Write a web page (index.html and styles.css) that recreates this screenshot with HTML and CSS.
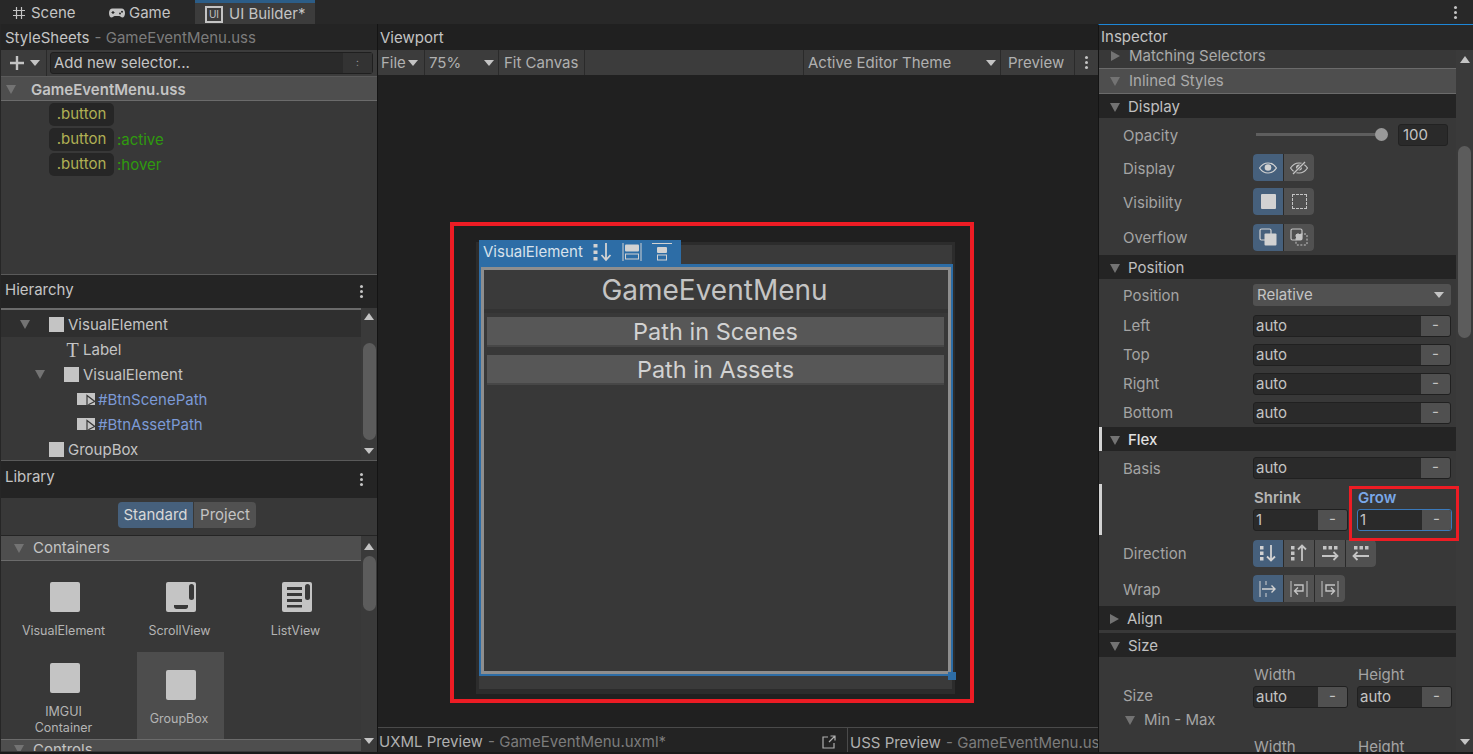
FILE: index.html
```html
<!DOCTYPE html>
<html lang="en">
<head>
    <meta charset="UTF-8">
    <title>UI Builder</title>
    <link rel="stylesheet" href="styles.css">
</head>
<body>
    <!-- Abas do editor -->
    <div class="tabs">
        <div class="tab tab-scene">
            <svg class="tab-icon" width="14" height="14" viewBox="0 0 14 14"><path d="M4.500 1v12M9.500 1v12M1 4.500h12M1 9.500h12" stroke="#c4c4c4" stroke-width="1.200" fill="none"/></svg>
            Scene
        </div>
        <div class="tab tab-game">
            <svg class="tab-icon" width="18" height="12" viewBox="0 0 18 12"><path d="M4.500 1.500h9c2.200 0 3.500 1.800 3.500 4.500s-1 4.500-2.600 4.500c-1.300 0-2-1.500-3.200-1.500H6.800c-1.200 0-1.900 1.500-3.200 1.500C2 10.500 1 8.700 1 6s1.300-4.500 3.500-4.500z" fill="#c4c4c4"/><path d="M3.500 5.500h3M5 4v3" stroke="#282828" stroke-width="1.200"/><circle cx="12" cy="6.500" r="1" fill="#282828"/><circle cx="14" cy="4.800" r="1" fill="#282828"/></svg>
            Game
        </div>
        <div class="tab tab-active">
            <span class="ui-mark">UI</span>
            UI Builder*
        </div>
        <div class="tabs-menu"><span class="dots"></span></div>
    </div>

    <div class="main">
        <!-- Coluna esquerda -->
        <div class="left">
            <div class="pane-title pane-stylesheets">StyleSheets <span class="dim">- GameEventMenu.uss</span></div>
            <div class="selector-bar">
                <div class="add-btn">
                    <svg width="16" height="16" viewBox="0 0 16 16"><path d="M8 1v14M1 8h14" stroke="#c4c4c4" stroke-width="2.400"/></svg>
                    <span class="tri-down small light"></span>
                </div>
                <div class="selector-input">
                    <span class="selector-text">Add new selector...</span>
                    <span class="selector-more">:</span>
                </div>
            </div>
            <div class="sheet-head"><span class="tri-down"></span><b>GameEventMenu.uss</b></div>
            <div class="sheet-list">
                <div class="sel-row"><span class="pill">.button</span></div>
                <div class="sel-row"><span class="pill">.button</span><span class="pseudo">:active</span></div>
                <div class="sel-row"><span class="pill">.button</span><span class="pseudo">:hover</span></div>
            </div>

            <div class="pane-title pane-hierarchy">Hierarchy <span class="dots"></span></div>
            <div class="tree-wrap">
                <div class="tree">
                    <div class="tree-row tree-selected lvl-1"><span class="tri-down"></span><span class="el-box"></span>VisualElement</div>
                    <div class="tree-row lvl-2"><span class="t-glyph">T</span>Label</div>
                    <div class="tree-row lvl-3"><span class="tri-down"></span><span class="el-box"></span>VisualElement</div>
                    <div class="tree-row lvl-4 named"><svg class="btn-glyph" width="19" height="15" viewBox="0 0 19 15"><rect x="0" y="1" width="18" height="12" fill="#c4c4c4"/><path d="M10 3.500v11l2.300-2.300 5.500-2.700z" fill="#c4c4c4" stroke="#383838" stroke-width="1.200"/></svg>#BtnScenePath</div>
                    <div class="tree-row lvl-4 named"><svg class="btn-glyph" width="19" height="15" viewBox="0 0 19 15"><rect x="0" y="1" width="18" height="12" fill="#c4c4c4"/><path d="M10 3.500v11l2.300-2.300 5.500-2.700z" fill="#c4c4c4" stroke="#383838" stroke-width="1.200"/></svg>#BtnAssetPath</div>
                    <div class="tree-row lvl-1 no-arrow"><span class="el-box"></span>GroupBox</div>
                </div>
                <div class="scroll scroll-tree">
                    <span class="tri-up light"></span>
                    <span class="thumb"></span>
                    <span class="tri-down light small"></span>
                </div>
            </div>

            <div class="pane-title pane-library">Library <span class="dots"></span></div>
            <div class="lib-toggle">
                <span class="lib-btn lib-on">Standard</span><span class="lib-btn">Project</span>
            </div>
            <div class="lib-body">
                <div class="lib-content">
                    <div class="lib-head"><span class="tri-down"></span>Containers</div>
                    <div class="lib-grid">
                        <div class="lib-item"><span class="lib-box"></span><span>VisualElement</span></div>
                        <div class="lib-item">
                            <svg class="lib-svg" width="30" height="30" viewBox="0 0 30 30"><rect width="30" height="30" rx="2" fill="#c4c4c4"/><rect x="23" y="2" width="5" height="16" rx="2.500" fill="#383838"/><path d="M8 23h14v1.500c0 1.500-1 2.500-2.500 2.500h-9C9 27 8 26 8 24.500z" fill="#383838"/></svg>
                            <span>ScrollView</span>
                        </div>
                        <div class="lib-item">
                            <svg class="lib-svg" width="30" height="30" viewBox="0 0 30 30"><rect width="30" height="30" rx="2" fill="#c4c4c4"/><rect x="23" y="2" width="5" height="16" rx="2.500" fill="#383838"/><path d="M5 5h15v3H5zM5 11h15v3H5zM5 17h15v3H5zM5 23h15v2.500H5z" fill="#383838"/></svg>
                            <span>ListView</span>
                        </div>
                        <div class="lib-item"><span class="lib-box"></span><span>IMGUI<br>Container</span></div>
                        <div class="lib-item lib-hover"><span class="lib-box"></span><span>GroupBox</span></div>
                    </div>
                    <div class="lib-head lib-head-last"><span class="tri-down"></span>Controls</div>
                </div>
                <div class="scroll scroll-lib">
                    <span class="tri-up light"></span>
                    <span class="thumb"></span>
                    <span class="tri-down light small"></span>
                </div>
            </div>
        </div>

        <!-- Coluna central -->
        <div class="center">
            <div class="pane-title pane-viewport">Viewport</div>
            <div class="view-bar">
                <div class="vb vb-file">File <span class="tri-down small light"></span></div>
                <div class="vb vb-zoom">75% <span class="tri-down small light"></span></div>
                <div class="vb vb-fit">Fit Canvas</div>
                <div class="vb vb-gap"></div>
                <div class="vb vb-theme">Active Editor Theme <span class="tri-down small light"></span></div>
                <div class="vb vb-preview">Preview</div>
                <div class="vb vb-more"><span class="dots"></span></div>
            </div>
            <div class="stage">
                <div class="canvas">
                    <div class="red-box"></div>
                    <div class="canvas-inner">
                        <div class="picked">
                            <div class="picked-tab">
                                <span>VisualElement</span>
                                <svg width="19" height="20" viewBox="0 0 19 20"><path d="M0.500 2h4v3.500h-4zM0.500 8.500h4V12h-4zM0.500 15h4v3.500h-4z" fill="#d2d2d2"/><path d="M13 1v16M8.500 13l4.500 5 4.500-5" stroke="#d2d2d2" stroke-width="1.800" fill="none"/></svg>
                                <svg width="20" height="20" viewBox="0 0 20 20"><path d="M1 1v18M19 1v18" stroke="#d2d2d2" stroke-width="1"/><rect x="3" y="2.500" width="14" height="7" rx="1" fill="#d2d2d2"/><rect x="3.500" y="12" width="13" height="5" fill="none" stroke="#d2d2d2"/></svg>
                                <svg width="20" height="20" viewBox="0 0 20 20"><path d="M0 1.500h20" stroke="#d2d2d2"/><rect x="5" y="5" width="10" height="6" rx="1" fill="#d2d2d2"/><rect x="5.500" y="13" width="9" height="5" fill="none" stroke="#d2d2d2"/></svg>
                            </div>
                            <div class="doc">
                                <div class="doc-title">GameEventMenu</div>
                                <div class="doc-btn">Path in Scenes</div>
                                <div class="doc-btn">Path in Assets</div>
                            </div>
                            <span class="resize-handle"></span>
                        </div>
                    </div>
                </div>
            </div>
            <div class="previews">
                <div class="preview-uxml">
                    <span>UXML Preview <span class="dim">- GameEventMenu.uxml*</span></span>
                    <svg width="14" height="14" viewBox="0 0 14 14"><path d="M6 2H1v11h11V8M7 7l6-6M8.500 1H13v4.500" stroke="#b0b0b0" stroke-width="1.200" fill="none"/></svg>
                </div>
                <div class="preview-uss">USS Preview <span class="dim">- GameEventMenu.uss</span></div>
            </div>
        </div>

        <!-- Inspetor -->
        <div class="inspector">
            <div class="pane-title pane-inspector">Inspector</div>
            <div class="insp-body">
                <div class="insp-content">
                    <div class="sec sec-matching"><span class="tri-right"></span>Matching Selectors</div>
                    <div class="sec sec-inlined"><span class="tri-down"></span>Inlined Styles</div>

                    <div class="group-head"><span class="tri-down"></span>Display</div>
                    <div class="row row-33">
                        <label>Opacity</label>
                        <div class="slider"><span class="slider-track"></span><span class="slider-knob"></span></div>
                        <span class="num-box">100</span>
                    </div>
                    <div class="row row-33">
                        <label>Display</label>
                        <div class="seg">
                            <span class="seg-btn seg-on"><svg width="18" height="12" viewBox="0 0 18 12"><path d="M0.500 6C3 2.300 6 1 9 1s6 1.300 8.500 5c-2.500 3.700-5.500 5-8.500 5S3 9.700.5 6z" fill="none" stroke="#d2d2d2" stroke-width="1.200"/><circle cx="9" cy="5.500" r="3.300" fill="#d2d2d2"/></svg></span>
                            <span class="seg-btn"><svg width="18" height="14" viewBox="0 0 18 14"><path d="M0.500 7C3 3.300 6 2 9 2s6 1.300 8.500 5c-2.500 3.700-5.500 5-8.500 5S3 10.700.5 7z" fill="none" stroke="#c4c4c4" stroke-width="1.200"/><circle cx="9" cy="6.500" r="3" fill="#c4c4c4"/><path d="M3 13L15 1" stroke="#555" stroke-width="3"/><path d="M3 13L15 1" stroke="#c4c4c4" stroke-width="1.200"/></svg></span>
                        </div>
                    </div>
                    <div class="row row-35">
                        <label>Visibility</label>
                        <div class="seg">
                            <span class="seg-btn seg-on"><span class="vis-solid"></span></span>
                            <span class="seg-btn"><span class="vis-dash"></span></span>
                        </div>
                    </div>
                    <div class="row row-36">
                        <label>Overflow</label>
                        <div class="seg">
                            <span class="seg-btn seg-on"><svg width="18" height="18" viewBox="0 0 18 18"><rect x="1" y="1" width="11" height="11" rx="1.500" fill="none" stroke="#d2d2d2" stroke-width="1.200"/><rect x="5.500" y="5.500" width="12" height="12" rx="1" fill="#d2d2d2"/></svg></span>
                            <span class="seg-btn"><svg width="18" height="18" viewBox="0 0 18 18"><rect x="1" y="1" width="11" height="11" rx="1.500" fill="none" stroke="#c4c4c4" stroke-width="1.200"/><rect x="6" y="6" width="6" height="6" fill="#c4c4c4"/><rect x="6" y="6" width="11" height="11" rx="1" fill="none" stroke="#c4c4c4" stroke-dasharray="2 1.500"/></svg></span>
                        </div>
                    </div>

                    <div class="group-head"><span class="tri-down"></span>Position</div>
                    <div class="row row-32">
                        <label>Position</label>
                        <div class="dropdown">Relative <span class="tri-down small light"></span></div>
                    </div>
                    <div class="row row-29"><label>Left</label><div class="field"><span>auto</span><b>-</b></div></div>
                    <div class="row row-29"><label>Top</label><div class="field"><span>auto</span><b>-</b></div></div>
                    <div class="row row-29"><label>Right</label><div class="field"><span>auto</span><b>-</b></div></div>
                    <div class="row row-29"><label>Bottom</label><div class="field"><span>auto</span><b>-</b></div></div>

                    <div class="group-head group-flex"><span class="tri-down"></span>Flex</div>
                    <div class="row row-33 row-basis"><label>Basis</label><div class="field"><span>auto</span><b>-</b></div></div>
                    <div class="pair pair-flex">
                        <div class="pair-col">
                            <span class="pair-label strong">Shrink</span>
                            <div class="field"><span>1</span><b>-</b></div>
                        </div>
                        <div class="pair-col pair-grow">
                            <div class="red-box red-small"></div>
                            <span class="pair-label strong grow-label">Grow</span>
                            <div class="field field-focus"><span>1</span><b>-</b></div>
                        </div>
                    </div>
                    <div class="row row-36 row-direction">
                        <label>Direction</label>
                        <div class="seg">
                            <span class="seg-btn seg-on"><svg width="18" height="18" viewBox="0 0 18 18"><path d="M1 2h3.500v3.500H1zM1 7.500h3.500V11H1zM1 13h3.500v3.500H1z" fill="#d2d2d2"/><path d="M12 1v15M8 12.500l4 4 4-4" stroke="#d2d2d2" stroke-width="1.800" fill="none"/></svg></span>
                            <span class="seg-btn"><svg width="18" height="18" viewBox="0 0 18 18"><path d="M1 2h3.500v3.500H1zM1 7.500h3.500V11H1zM1 13h3.500v3.500H1z" fill="#c4c4c4"/><path d="M12 17V2M8 5.500l4-4 4 4" stroke="#c4c4c4" stroke-width="1.800" fill="none"/></svg></span>
                            <span class="seg-btn"><svg width="18" height="18" viewBox="0 0 18 18"><path d="M2 2h3.500v3.500H2zM7.500 2H11v3.500H7.500zM13 2h3.500v3.500H13z" fill="#c4c4c4"/><path d="M1 12h15M12.500 8l4 4-4 4" stroke="#c4c4c4" stroke-width="1.800" fill="none"/></svg></span>
                            <span class="seg-btn"><svg width="18" height="18" viewBox="0 0 18 18"><path d="M2 2h3.500v3.500H2zM7.500 2H11v3.500H7.500zM13 2h3.500v3.500H13z" fill="#c4c4c4"/><path d="M17 12H2M5.500 8l-4 4 4 4" stroke="#c4c4c4" stroke-width="1.800" fill="none"/></svg></span>
                        </div>
                    </div>
                    <div class="row row-35">
                        <label>Wrap</label>
                        <div class="seg">
                            <span class="seg-btn seg-on"><svg width="18" height="18" viewBox="0 0 18 18"><path d="M1 1v16" stroke="#d2d2d2"/><path d="M7 1v4M7 13v4" stroke="#d2d2d2"/><path d="M3 9h13M12.500 5.500L16 9l-3.500 3.500" stroke="#d2d2d2" stroke-width="1.400" fill="none"/></svg></span>
                            <span class="seg-btn"><svg width="18" height="18" viewBox="0 0 18 18"><path d="M1 1v16M17 1v16" stroke="#c4c4c4"/><path d="M4 5h9v6H5M8 7.500L4.500 11 8 14.500" stroke="#c4c4c4" stroke-width="1.400" fill="none"/></svg></span>
                            <span class="seg-btn"><svg width="18" height="18" viewBox="0 0 18 18"><path d="M1 1v16M17 1v16" stroke="#c4c4c4"/><path d="M14 5H5v6h8M10 7.500l3.500 3.500-3.500 3.500" stroke="#c4c4c4" stroke-width="1.400" fill="none"/></svg></span>
                        </div>
                    </div>

                    <div class="group-head"><span class="tri-right"></span>Align</div>
                    <div class="group-head group-size"><span class="tri-down"></span>Size</div>
                    <div class="size-grid">
                        <label class="size-label">Size</label>
                        <div class="pair">
                            <div class="pair-col"><span class="pair-label">Width</span><div class="field"><span>auto</span><b>-</b></div></div>
                            <div class="pair-col"><span class="pair-label">Height</span><div class="field"><span>auto</span><b>-</b></div></div>
                        </div>
                    </div>
                    <div class="minmax"><span class="tri-down"></span>Min - Max</div>
                    <div class="pair pair-last">
                        <div class="pair-col"><span class="pair-label">Width</span></div>
                        <div class="pair-col"><span class="pair-label">Height</span></div>
                    </div>
                </div>
                <div class="scroll scroll-insp">
                    <span class="tri-up light"></span>
                    <span class="thumb"></span>
                    <span class="tri-down light small"></span>
                </div>
            </div>
        </div>
    </div>
</body>
</html>
```

FILE: styles.css
```css
/* Estilo geral: editor escuro */
* {
    box-sizing: border-box;
}
html, body {
    margin: 0;
    height: 100%;
}
body {
    width: 1473px;
    height: 754px;
    overflow: hidden;
    background-color: #191919;
    color: #c4c4c4;
    font-family: Inter, "Liberation Sans", sans-serif;
    font-size: 15px;
    line-height: 18px;
}
.dim {
    margin-left: 1px;
    color: #7c7c7c;
}

/* Triangulos */
.tri-down, .tri-up, .tri-right {
    display: inline-block;
    width: 0;
    height: 0;
    flex: none;
}
.tri-down {
    border-left: 5.5px solid transparent;
    border-right: 5.5px solid transparent;
    border-top: 9px solid #737373;
}
.tri-up {
    border-left: 5.5px solid transparent;
    border-right: 5.5px solid transparent;
    border-bottom: 7px solid #c4c4c4;
}
.tri-right {
    border-top: 5.5px solid transparent;
    border-bottom: 5.5px solid transparent;
    border-left: 9px solid #737373;
}
.tri-down.small {
    border-left-width: 5px;
    border-right-width: 5px;
    border-top-width: 6px;
}
.tri-down.light {
    border-top-color: #c4c4c4;
}
.dots {
    display: inline-block;
    width: 3px;
    height: 3px;
    border-radius: 50%;
    background: #c4c4c4;
    box-shadow: 0 -5px 0 #c4c4c4, 0 5px 0 #c4c4c4;
}

/* Abas */
.tabs {
    display: flex;
    height: 24px;
    background-color: #282828;
    align-items: stretch;
}
.tab {
    display: flex;
    align-items: center;
    gap: 5px;
    padding-top: 1px;
}
.tab-scene {
    width: 108px;
    padding-left: 12px;
}
.tab-game {
    width: 87px;
    padding-left: 0;
    gap: 3px;
}
.tab-active {
    width: 120px;
    padding-left: 10px;
    background-color: #3c3c3c;
    border-top: 3px solid #2c5d87;
    gap: 6px;
}
.ui-mark {
    display: inline-block;
    width: 18px;
    height: 17px;
    border: 2px solid #c4c4c4;
    font-size: 10px;
    line-height: 13px;
    text-align: center;
}
.tabs-menu {
    margin-left: auto;
    width: 36px;
    display: flex;
    align-items: center;
    justify-content: center;
}

/* Colunas */
.main {
    display: flex;
    height: 728px;
    overflow: hidden;
}
.left {
    width: 377px;
    flex: none;
    background-color: #383838;
    border-left: 1px solid #262626;
}
.center {
    width: 721px;
    flex: none;
    display: flex;
    flex-direction: column;
    background-color: #202020;
    border-left: 1px solid #141414;
}
.inspector {
    flex: 1;
    min-width: 0;
    background-color: #383838;
    border-left: 1px solid #141414;
    border-top: 1px solid #1d87d8;
    display: flex;
    flex-direction: column;
}
.pane-title {
    background-color: #242424;
    display: flex;
    align-items: center;
    padding-left: 4px;
    white-space: pre;
}

/* Painel StyleSheets */
.pane-stylesheets {
    height: 26px;
    padding-top: 1px;
}
.selector-bar {
    height: 27px;
    display: flex;
    background-color: #3c3c3c;
    border-bottom: 1px solid #5a5a5a;
}
.add-btn {
    width: 46px;
    display: flex;
    align-items: center;
    gap: 5px;
    padding-left: 8px;
    border-right: 1px solid #2a2a2a;
}
.selector-input {
    width: 323px;
    height: 22px;
    margin: 2px 0 0 3px;
    display: flex;
    justify-content: space-between;
    background-color: #2a2a2a;
    border: 1px solid #1f1f1f;
    border-radius: 3px;
}
.selector-text {
    padding-left: 3px;
    line-height: 20px;
}
.selector-more {
    width: 29px;
    background-color: #333;
    text-align: center;
    font-size: 10px;
    line-height: 18px;
    color: #999;
}
.sheet-head {
    height: 24px;
    display: flex;
    align-items: center;
    padding: 2px 0 0 5px;
    background-color: #4e4e4e;
    border-bottom: 1px solid #6b6b6b;
}
.sheet-head b {
    margin-left: 15px;
    font-weight: 600;
}
.sheet-list {
    height: 174px;
    padding-top: 1px;
    border-bottom: 1px solid #5a5a5a;
}
.sel-row {
    height: 25px;
    display: flex;
    align-items: center;
    padding-left: 48px;
}
.pill {
    width: 65px;
    height: 23px;
    background-color: #262626;
    border-radius: 5px;
    color: #b0b054;
    text-align: center;
    line-height: 22px;
}
.pseudo {
    margin-left: 3px;
    color: #2f9a0e;
}

/* Hierarquia */
.pane-hierarchy, .pane-library {
    justify-content: space-between;
    padding-right: 14px;
}
.pane-hierarchy {
    height: 33px;
    padding-bottom: 4px;
}
.pane-hierarchy .dots {
    margin-top: 4px;
}
.tree-wrap {
    height: 153px;
    display: flex;
    border-bottom: 1px solid #5a5a5a;
}
.tree {
    width: 360px;
    border-top: 2px solid #6a6a6a;
    overflow: hidden;
}
.tree-row {
    height: 25px;
    display: flex;
    align-items: center;
}
.tree-selected {
    height: 27px;
    padding-top: 2px;
    background-color: #2f2f2f;
}
.lvl-1 {
    padding-left: 19px;
}
.lvl-1 .el-box {
    margin-left: 19px;
}
.lvl-1.no-arrow .el-box {
    margin-left: 29px;
}
.lvl-2 {
    padding-left: 64px;
}
.lvl-3 {
    padding-left: 34px;
}
.lvl-3 .el-box {
    margin-left: 19px;
}
.lvl-4 {
    padding-left: 76px;
}
.named {
    color: #7c9ad6;
}
.el-box {
    width: 15px;
    height: 15px;
    background-color: #c4c4c4;
    margin-right: 4px;
    flex: none;
}
.t-glyph {
    width: 15px;
    margin-right: 3px;
    text-align: center;
    font-family: "Liberation Serif", serif;
    font-size: 20px;
}
.btn-glyph {
    margin-right: 2px;
    flex: none;
}

/* Barras de rolagem */
.scroll {
    flex: 1;
    min-width: 0;
    position: relative;
    display: flex;
    flex-direction: column;
    align-items: center;
    background-color: #3a3a3a;
}
.thumb {
    display: block;
    width: 13px;
    background-color: #5c5c5c;
    border-radius: 7px;
}
.scroll-tree {
    padding-top: 5px;
}
.scroll-tree .thumb {
    height: 97px;
    margin: 23px 0 8px;
}

/* Biblioteca */
.pane-library {
    height: 37px;
    padding-bottom: 6px;
}
.pane-library .dots {
    margin-top: 6px;
}
.lib-toggle {
    height: 38px;
    display: flex;
    padding: 4px 0 0 117px;
    background-color: #383838;
    border-bottom: 1px solid #242424;
}
.lib-btn {
    width: 62px;
    height: 26px;
    background-color: #515151;
    border-radius: 0 4px 4px 0;
    text-align: center;
    line-height: 25px;
}
.lib-on {
    width: 75px;
    margin-right: 1px;
    background-color: #46607c;
    border-radius: 4px 0 0 4px;
    color: #d8d8d8;
}
.lib-body {
    display: flex;
    height: 215px;
}
.lib-content {
    width: 360px;
    overflow: hidden;
}
.lib-head {
    height: 25px;
    display: flex;
    align-items: center;
    padding-left: 13px;
    gap: 9px;
    background-color: #4e4e4e;
    border-bottom: 1px solid #6b6b6b;
}
.lib-head-last {
    border-bottom: 0;
    border-top: 1px solid #6b6b6b;
    align-items: flex-start;
    padding-top: 1px;
}
.lib-head-last .tri-down {
    margin-top: 4px;
}
.lib-grid {
    height: 178px;
    display: grid;
    grid-template-columns: 116px 116px 116px;
    grid-template-rows: 91px 87px;
    padding-left: 6px;
}
.lib-item {
    display: flex;
    flex-direction: column;
    align-items: center;
    font-size: 12.5px;
    line-height: 16px;
    text-align: center;
    color: #b4b4b4;
    padding-top: 21px;
}
.lib-item:nth-child(n+4) {
    padding-top: 11px;
}
.lib-item > span:last-child {
    margin-right: 3px;
}
.lib-box, .lib-svg {
    display: block;
    width: 30px;
    height: 30px;
    margin-bottom: 11px;
    flex: none;
}
.lib-box {
    background-color: #c4c4c4;
    border-radius: 2px;
}
.lib-hover {
    width: 87px;
    margin-left: 14px;
    background-color: #4d4d4d;
    padding-top: 18px !important;
}
.scroll-lib {
    padding-top: 7px;
    background-color: #3a3a3a;
}
.scroll-lib .thumb {
    height: 55px;
    margin: 6px 0 127px;
}

/* Viewport */
.pane-viewport {
    height: 26px;
    padding: 1px 0 0 2px;
    background-color: #202020;
}
.view-bar {
    height: 25px;
    display: flex;
    background-color: #3c3c3c;
    color: #b0b0b0;
    flex: none;
}
.vb {
    display: flex;
    align-items: center;
    justify-content: space-between;
    padding: 0 4px;
    border-right: 1px solid #2a2a2a;
}
.vb-file {
    width: 47px;
    padding: 0 6px 0 3px;
}
.vb-zoom {
    width: 74px;
}
.vb-fit {
    width: 86px;
    padding-left: 5px;
}
.vb-gap {
    width: 219px;
}
.vb-theme {
    width: 197px;
}
.vb-preview {
    width: 74px;
    padding-left: 7px;
}
.vb-more {
    flex: 1;
    justify-content: center;
    border-right: 0;
}
.stage {
    flex: 1;
    min-height: 0;
    padding: 167px 0 0 98px;
    background-color: #202020;
}
.canvas {
    position: relative;
    width: 479px;
    height: 452px;
    padding: 3px 3px 5px 3px;
    background-color: #2c2c2c;
}
.canvas-inner {
    height: 100%;
    background-color: #3a3a3a;
    padding-top: 19px;
}
.picked {
    position: relative;
    width: 474px;
    height: 412px;
    border: 2px solid #2d6da6;
    border-top-width: 3px;
}
.picked-tab {
    position: absolute;
    left: -2px;
    top: -27px;
    width: 202px;
    height: 24px;
    display: flex;
    align-items: center;
    gap: 10px;
    padding-left: 4px;
    background-color: #2d6da6;
    color: #d8e2ec;
}
.picked-tab span {
    margin-right: 0;
}
.doc {
    height: 100%;
    border: 3px solid #8e8e8e;
    background-color: #383838;
}
.doc-title {
    height: 43px;
    background-color: #3a3a3a;
    border-bottom: 4px solid #333;
    text-align: center;
    font-size: 28px;
    line-height: 40px;
    color: #c4c4c4;
    padding-right: 3px;
}
.doc-btn {
    height: 30px;
    margin: 4px 4px 8px 3px;
    background-color: #575757;
    border-bottom: 2px solid #474747;
    text-align: center;
    font-size: 23.5px;
    line-height: 30px;
    color: #d2d2d2;
}
.resize-handle {
    position: absolute;
    right: -5px;
    bottom: -6px;
    width: 8px;
    height: 8px;
    background-color: #2d6da6;
}
.red-box {
    position: absolute;
    left: -26px;
    top: -20px;
    width: 524px;
    height: 481px;
    border: 4px solid #ed1c24;
    z-index: 2;
    pointer-events: none;
}
.previews {
    height: 25px;
    flex: none;
    display: flex;
    border-top: 1px solid #4a4a4a;
    background-color: #232323;
    overflow: hidden;
    white-space: nowrap;
    color: #b0b0b0;
}
.preview-uxml {
    width: 470px;
    flex: none;
    display: flex;
    align-items: center;
    justify-content: space-between;
    padding: 3px 11px 0 1px;
    border-right: 1px solid #4a4a4a;
}
.preview-uss {
    padding: 3px 0 0 2px;
    line-height: 24px;
}

/* Inspetor */
.pane-inspector {
    height: 25px;
    flex: none;
    padding: 0 0 1px 2px;
    background-color: #282828;
}
.insp-body {
    flex: 1;
    min-height: 0;
    display: flex;
}
.insp-content {
    width: 357px;
    flex: none;
    color: #a4a4a4;
}
.sec {
    display: flex;
    align-items: center;
    gap: 9px;
    padding-left: 12px;
    color: #aaa;
}
.sec-matching {
    height: 19px;
    padding-bottom: 6px;
    background-color: #383838;
    border-bottom: 1px solid #6b6b6b;
}
.sec-inlined {
    height: 25px;
    background-color: #4e4e4e;
    border-bottom: 1px solid #6b6b6b;
    padding-left: 11px;
}
.group-head {
    height: 24px;
    display: flex;
    align-items: center;
    gap: 8px;
    padding: 2px 0 0 11px;
    background-color: #242424;
    color: #c0c0c0;
}
.group-flex {
    border-left: 3px solid #d2d2d2;
    padding-left: 8px;
    color: #e0e0e0;
    font-weight: 500;
}
.group-size {
    margin-top: 3px;
}
.row {
    display: flex;
    align-items: center;
    padding-left: 24px;
}
.row label {
    width: 130px;
    flex: none;
}
.row-32 label, .row-33 label, .row-35 label, .row-36 label {
    padding-top: 2px;
}
.row-29 {
    height: 29px;
}
.row-32 {
    height: 32px;
}
.row-33 {
    height: 33px;
}
.row-35 {
    height: 35px;
}
.row-36 {
    height: 36px;
}
.slider {
    position: relative;
    width: 132px;
    height: 14px;
    margin-left: 3px;
    flex: none;
}
.slider-track {
    position: absolute;
    left: 0;
    right: 6px;
    top: 5px;
    height: 3px;
    background-color: #5e5e5e;
}
.slider-knob {
    position: absolute;
    right: 0;
    top: 0;
    width: 13px;
    height: 13px;
    border-radius: 50%;
    background-color: #999;
}
.num-box {
    width: 50px;
    height: 22px;
    margin-left: 10px;
    padding-left: 4px;
    background-color: #2a2a2a;
    border: 1px solid #222;
    border-radius: 3px;
    color: #c4c4c4;
    line-height: 20px;
}
.seg {
    display: flex;
    gap: 1px;
    background-color: #2a2a2a;
    border-radius: 4px;
}
.seg-btn {
    width: 30px;
    height: 27px;
    display: flex;
    align-items: center;
    justify-content: center;
    background-color: #515151;
}
.seg-btn:first-child {
    border-radius: 4px 0 0 4px;
}
.seg-btn:last-child {
    border-radius: 0 4px 4px 0;
}
.seg-on {
    background-color: #46607c;
}
.vis-solid {
    width: 15px;
    height: 15px;
    background-color: #d2d2d2;
    border-radius: 1px;
}
.vis-dash {
    width: 15px;
    height: 15px;
    border: 1px dashed #c4c4c4;
}
.dropdown {
    width: 198px;
    height: 22px;
    display: flex;
    align-items: center;
    justify-content: space-between;
    padding: 0 7px 0 4px;
    background-color: #515151;
    border-radius: 3px;
    color: #c4c4c4;
}
.field {
    display: flex;
    width: 198px;
    height: 22px;
    background-color: #2a2a2a;
    border: 1px solid #202020;
    border-radius: 3px;
    color: #c4c4c4;
    overflow: hidden;
}
.field span {
    flex: 1;
    padding-left: 2px;
    line-height: 20px;
}
.field b {
    width: 29px;
    flex: none;
    background-color: #505050;
    text-align: center;
    font-weight: 400;
    line-height: 18px;
}
.pair .field {
    width: 95px;
}
.field-focus {
    border-color: #3a79bb;
}
.pair {
    display: flex;
    gap: 9px;
    padding-left: 154px;
}
.pair-flex {
    height: 51px;
    border-left: 3px solid #d2d2d2;
    padding-left: 151px;
    padding-top: 4px;
}
.pair-col {
    position: relative;
    width: 95px;
    flex: none;
}
.pair-label {
    display: block;
    height: 21px;
    padding-left: 1px;
    line-height: 19px;
}
.strong {
    font-weight: 600;
    color: #b4b4b4;
}
.grow-label {
    color: #7aa8e8;
}
.red-small {
    left: -8px;
    top: -2px;
    width: 110px;
    height: 55px;
    border-width: 3px;
}
.size-grid {
    position: relative;
    height: 54px;
    padding-top: 8px;
}
.size-grid .pair {
    padding-left: 154px;
}
.size-label {
    position: absolute;
    left: 24px;
    top: 30px;
}
.minmax {
    height: 18px;
    display: flex;
    align-items: center;
    gap: 9px;
    padding-left: 26px;
}
.pair-last {
    margin-top: 8px;
}
.scroll-insp {
    padding-top: 6px;
    background-color: #3a3a3a;
}
.scroll-insp .thumb {
    height: 192px;
    margin: 83px 0 401px;
}
```
